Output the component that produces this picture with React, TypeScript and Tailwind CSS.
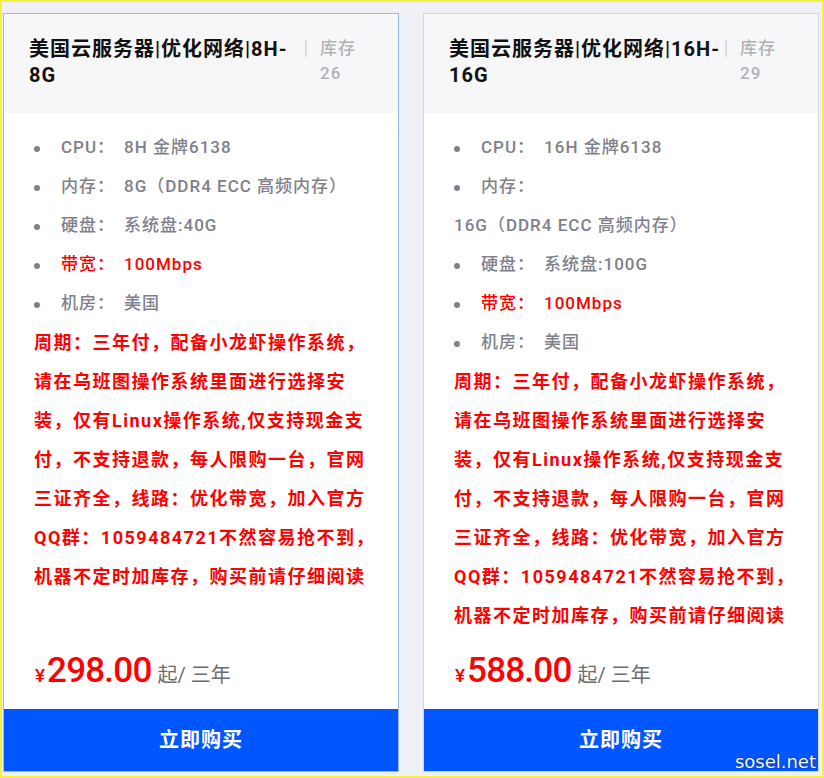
import React from "react";

type Spec = { label: string; value: string; red?: boolean };
type Plan = {
  title: string;
  stock: number;
  specs: Spec[];
  price: string;
  active?: boolean;
};

const NOTE =
  "周期：三年付，配备小龙虾操作系统，请在乌班图操作系统里面进行选择安装，仅有Linux操作系统,仅支持现金支付，不支持退款，每人限购一台，官网三证齐全，线路：优化带宽，加入官方QQ群：1059484721不然容易抢不到，机器不定时加库存，购买前请仔细阅读";

const plans: Plan[] = [
  {
    title: "美国云服务器|优化网络|8H-\u200B8G",
    stock: 26,
    active: true,
    price: "298.00",
    specs: [
      { label: "CPU：", value: "8H 金牌6138" },
      { label: "内存：", value: "8G（DDR4 ECC 高频内存）" },
      { label: "硬盘：", value: "系统盘:40G" },
      { label: "带宽：", value: "100Mbps", red: true },
      { label: "机房：", value: "美国" },
    ],
  },
  {
    title: "美国云服务器|优化网络|16H-\u200B16G",
    stock: 29,
    price: "588.00",
    specs: [
      { label: "CPU：", value: "16H 金牌6138" },
      { label: "内存：", value: "16G（DDR4 ECC 高频内存）" },
      { label: "硬盘：", value: "系统盘:100G" },
      { label: "带宽：", value: "100Mbps", red: true },
      { label: "机房：", value: "美国" },
    ],
  },
];

function Card({ plan }: { plan: Plan }) {
  return (
    <div
      className={
        plan.active
          ? "flex h-[759px] w-[396px] shrink-0 flex-col border border-[#9db9e8] bg-white"
          : "flex h-[759px] w-[396px] shrink-0 flex-col border border-[#d6d7dd] bg-white"
      }
    >
      <div className="flex items-start bg-[#f7f7fa] pb-[25px] pl-[25px] pt-[22px]">
        <div className="w-[272px] text-[20px] font-bold leading-[26px] tracking-[1px] text-[#111111]">
          {plan.title}
        </div>
        <div className="ml-[4px] mt-[4px] h-[17px] w-[2px] shrink-0 bg-[#dcdcdf]" />
        <div className="pl-[13px] text-[17px] font-medium leading-[25px] tracking-[1px] text-[#b2b2b6]">
          <div>库存</div>
          <div>{plan.stock}</div>
        </div>
      </div>

      <div className="flex flex-1 flex-col">
        <div className="pl-[30px] pr-[18px] pt-[15px]">
          <ul className="w-[322px]">
            {plan.specs.map((s) => (
              <li
                key={s.label}
                className={
                  s.red
                    ? "text-[17px] font-medium leading-[39px] tracking-[1px] text-[#ff0000]"
                    : "text-[17px] font-medium leading-[39px] tracking-[1px] text-[#7f808b]"
                }
              >
                <span className="mr-[21px] inline-block h-[6px] w-[6px] rounded-full bg-[#7f808b] align-middle" />
                <span className="pr-[9px]">{s.label}</span>
                <span className="inline-block">{s.value}</span>
              </li>
            ))}
          </ul>
          <p className="text-[18px] font-bold leading-[39px] tracking-[1.5px] text-[#ff0000]">
            {NOTE}
          </p>
        </div>

        <div className="mb-[21px] mt-auto flex items-baseline pl-[31px] leading-none">
          <span className="text-[19px] font-medium text-[#ff0000]">¥</span>
          <span className="ml-[2px] text-[35px] font-medium tracking-[-0.8px] text-[#ff0000]">
            {plan.price}
          </span>
          <span className="ml-[6px] text-[20px] text-[#6b6b70]">起/ 三年</span>
        </div>

        <button className="flex h-[62px] w-full items-center justify-center bg-[#0057ff] text-[20px] font-bold tracking-[1px] text-white">
          立即购买
        </button>
      </div>
    </div>
  );
}

export default function App() {
  return (
    <div
      className="relative flex h-[778px] w-[824px] gap-[24px] border-x-2 border-b-2 border-t-2 border-[#f5f23f] bg-[#f0f1f6] pl-[1px] pt-[11px]"
      style={{ fontFamily: 'Roboto, "Noto Sans CJK SC", sans-serif' }}
    >
      {plans.map((p) => (
        <Card key={p.title} plan={p} />
      ))}
      <div
        className="absolute bottom-[5px] right-[6px] text-[18px] leading-none text-[#f6f6f6] [text-shadow:0_0_2px_rgba(0,0,0,0.65)]"
        style={{ fontFamily: '"DejaVu Sans", sans-serif' }}
      >
        sosel.net
      </div>
    </div>
  );
}
